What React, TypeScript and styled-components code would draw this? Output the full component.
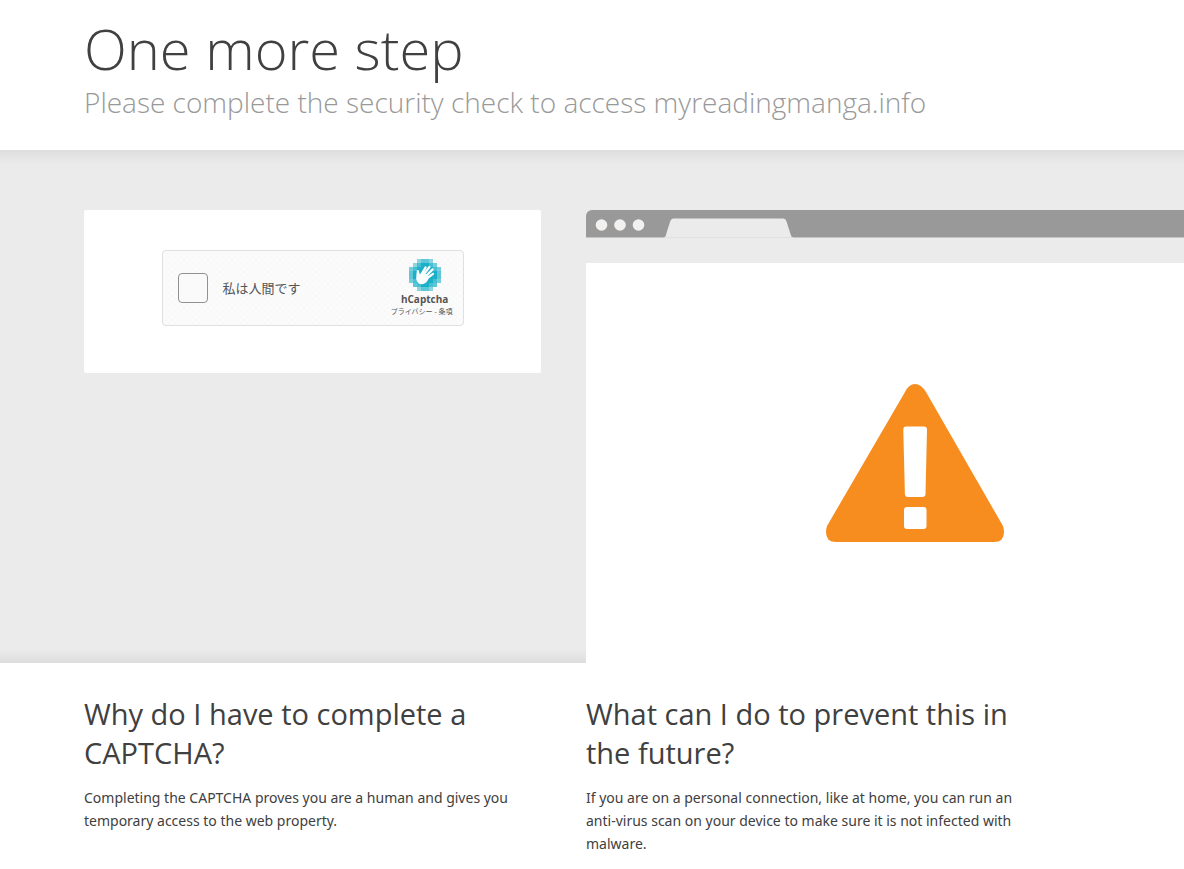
import React from "react";
import styled, { createGlobalStyle } from "styled-components";

const GlobalStyle = createGlobalStyle`
  * { box-sizing: border-box; }
  body {
    margin: 0;
    background: #fff;
    color: #404040;
    font: 400 14px/23px "Open Sans", "Noto Sans", "Noto Sans CJK JP", sans-serif;
    overflow-x: hidden;
  }
`;

const Header = styled.header`
  padding: 14px 84px 28px;
`;

const Title = styled.h1`
  margin: 0;
  font-size: 56px;
  line-height: 68px;
  font-weight: 300;
`;

const Subtitle = styled.h2`
  margin: 0;
  color: #999;
  font-size: 28px;
  line-height: 40px;
  font-weight: 300;
`;

const Hero = styled.section`
  display: grid;
  grid-template-columns: 457fr 598fr;
  column-gap: 45px;
  align-items: start;
  padding: 60px 0 0 84px;
  overflow: hidden;
  background:
    linear-gradient(#dedede, #ebebeb) top / 100% 14px no-repeat,
    linear-gradient(#ebebeb, #dddddd) bottom / 100% 14px no-repeat,
    #ebebeb;
`;

const CaptchaCard = styled.div`
  display: flex;
  justify-content: center;
  padding: 40px 20px 47px;
  border-radius: 2px;
  background: #fff;
`;

const Widget = styled.div`
  display: flex;
  align-items: center;
  justify-content: space-between;
  width: 302px;
  height: 76px;
  padding: 0 10px 0 15px;
  border: 1px solid #e0e0e0;
  border-radius: 4px;
  background:
    radial-gradient(circle, #f8f8f8 1px, transparent 1px) 0 0 / 6px 6px,
    radial-gradient(circle, #f8f8f8 1px, transparent 1px) 3px 3px / 6px 6px,
    #fbfbfb;
`;

const CheckLabel = styled.label`
  display: flex;
  align-items: center;
  gap: 15px;
  color: #555;
  font-size: 13px;
`;

const CheckBox = styled.input`
  appearance: none;
  width: 30px;
  height: 30px;
  margin: 0;
  border: 1px solid #919191;
  border-radius: 4px;
  background: #fafafa;
`;

const Brand = styled.div`
  display: flex;
  flex-direction: column;
  align-items: center;
  color: #555;
`;

const BrandMark = styled.div`
  display: flex;
  flex-direction: column;
  align-items: center;
  padding-left: 6px;
`;

const BrandName = styled.strong`
  font-size: 10px;
  line-height: 16px;
  font-weight: 700;
`;

const BrandLinks = styled.div`
  font-size: 7px;
  line-height: 10px;
`;

const BrandLink = styled.a`
  color: inherit;
  text-decoration: none;
`;

const Browser = styled.div`
  width: 110%;
`;

const TabBar = styled.div`
  height: 28px;
  border-radius: 6px 0 0 0;
  border-bottom: 1px solid #c4c4c4;
  background: #999;
`;

const AddressBar = styled.div`
  height: 25px;
  background: #ebebeb;
`;

const Page = styled.div`
  display: flex;
  justify-content: center;
  padding: 121px 0;
  background: #fff;
`;

const Questions = styled.section`
  display: grid;
  grid-template-columns: 1fr 1fr;
  column-gap: 45px;
  padding: 31px 141px 15px 84px;
`;

const Question = styled.h2`
  margin: 0 0 14px;
  font-size: 29px;
  line-height: 39px;
  font-weight: 400;
`;

const Answer = styled.p`
  margin: 0;
  padding-right: 16px;
  font-family: "Noto Sans", "Open Sans", sans-serif;
`;

const logoRows = [
  [0, 0, 0.5, 0.7, 0.7, 0.5, 0, 0],
  [0, 0.5, 0.8, 1, 1, 0.8, 0.6, 0],
  [0.6, 0.8, 1, 1, 1, 1, 0.8, 0.6],
  [0.7, 1, 1, 1, 1, 1, 1, 0.7],
  [0.7, 1, 1, 1, 1, 1, 1, 0.7],
  [0.6, 0.8, 1, 1, 1, 1, 0.8, 0.6],
  [0, 0.7, 0.8, 1, 1, 0.8, 0.7, 0],
  [0, 0, 0.5, 0.7, 0.7, 0.5, 0, 0],
];

const HandLogo = () => (
  <svg width="32" height="32" viewBox="0 0 32 32" aria-hidden="true">
    <g fill="#1bb0c8" shapeRendering="crispEdges">
      {logoRows.map((row, y) =>
        row.map((o, x) =>
          o ? <rect key={`${x}-${y}`} x={x * 4} y={y * 4} width="4" height="4" opacity={o} /> : null
        )
      )}
    </g>
    <path
      d="M8.800 12 10 17 M12 16 16.600 8.400 M13.500 17 20.400 8 M15.500 18.500 23.600 10.400 M17 20 24 14.800"
      fill="none"
      stroke="#fff"
      strokeWidth="2.200"
      strokeLinecap="round"
    />
    <path
      d="M7.700 12.500 L10 16 L12 14.600 L17 15 L20 17.500 C19.400 21.800 16.500 25.200 12.800 25.200 C9 25.200 7.200 22 7.200 19 Z"
      fill="#fff"
    />
  </svg>
);

const TabDrawing = () => (
  <svg width="220" height="28" viewBox="0 0 220 28" display="block" aria-hidden="true">
    <g fill="#f2f1ef">
      <circle cx="15.500" cy="15" r="5.800" />
      <circle cx="34" cy="15" r="5.800" />
      <circle cx="52.500" cy="15" r="5.800" />
    </g>
    <path
      d="M78 28 C79.500 27 80 25 80.500 23 L84 12 Q85 8.500 87.500 8.500 H197 Q199.500 8.500 200.500 11.500 L204.500 24 Q205.300 27 207 28 Z"
      fill="#ebebeb"
    />
    <path d="M78 27.500 H207" stroke="#e0e0e0" />
  </svg>
);

const Warning = () => (
  <svg width="178" height="158" viewBox="0 0 178 158" role="img" aria-label="Warning">
    <path
      d="M79 8 Q83 0 89 0 Q95 0 100 8 L177 142 Q178 145 178 148 Q178 158 168 158 H10 Q0 158 0 148 Q0 145 1 142 Z"
      fill="#f78d1f"
    />
    <path
      d="M80 42.500 H98 Q101 42.500 101 45.500 L99.500 110 Q99.400 113 96.500 113 H82 Q79 113 78.900 110 L77.300 45.500 Q77.300 42.500 80 42.500 Z"
      fill="#fff"
    />
    <rect x="78" y="123" width="22.500" height="22" rx="3" fill="#fff" />
  </svg>
);

const App: React.FC = () => (
  <>
    <GlobalStyle />
    <Header>
      <Title>One more step</Title>
      <Subtitle>Please complete the security check to access myreadingmanga.info</Subtitle>
    </Header>
    <main>
      <Hero>
        <CaptchaCard>
          <Widget>
            <CheckLabel>
              <CheckBox type="checkbox" />
              私は人間です
            </CheckLabel>
            <Brand>
              <BrandMark>
                <HandLogo />
                <BrandName>hCaptcha</BrandName>
              </BrandMark>
              <BrandLinks>
                <BrandLink href="#privacy">プライバシー</BrandLink> -{" "}
                <BrandLink href="#terms">条項</BrandLink>
              </BrandLinks>
            </Brand>
          </Widget>
        </CaptchaCard>
        <Browser>
          <TabBar>
            <TabDrawing />
          </TabBar>
          <AddressBar />
          <Page>
            <Warning />
          </Page>
        </Browser>
      </Hero>
      <Questions>
        <div>
          <Question>Why do I have to complete a CAPTCHA?</Question>
          <Answer>
            Completing the CAPTCHA proves you are a human and gives you temporary access to the web
            property.
          </Answer>
        </div>
        <div>
          <Question>What can I do to prevent this in the future?</Question>
          <Answer>
            If you are on a personal connection, like at home, you can run an anti-virus scan on your
            device to make sure it is not infected with malware.
          </Answer>
        </div>
      </Questions>
    </main>
  </>
);

export default App;
